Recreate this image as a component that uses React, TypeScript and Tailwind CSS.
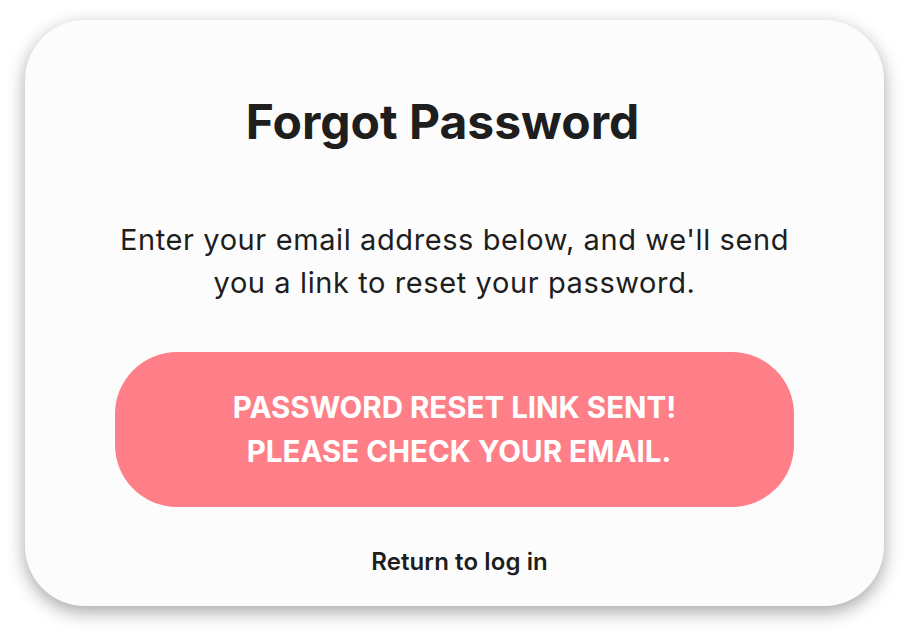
export default function App() {
  return (
    <div
      className="w-[909px] h-[635px] bg-white flex items-start justify-start pl-[25px] pt-[20px]"
      style={{ fontFamily: "Inter, 'Noto Sans', sans-serif" }}
    >
      <div className="w-[859px] h-[586px] bg-[#fcfcfc] rounded-[60px] shadow-[0_6px_18px_rgba(0,0,0,0.35)] flex flex-col items-center">
        <h1 className="mt-[74px] mr-[24px] text-[48px] leading-[56px] font-bold text-[#1e1e1e]">
          Forgot Password
        </h1>

        <p className="mt-[68px] text-center text-[29px] leading-[43px] tracking-[0.6px] text-[#1e1e1e]">
          Enter your email address below, and we'll send
          <br />
          you a link to reset your password.
        </p>

        <div className="mt-[48px] w-[679px] h-[155px] rounded-[62px] bg-[#ff7f88] flex flex-col items-center justify-center text-center text-white font-bold text-[29.5px] leading-[43.5px] uppercase">
          <span>Password reset link sent!</span>
          <span className="pl-[9px]">Please check your email.</span>
        </div>

        <button className="mt-[40px] ml-[10px] text-[24px] leading-[30px] tracking-[0.1px] font-semibold text-[#1e1e1e]">
          Return to log in
        </button>
      </div>
    </div>
  );
}
